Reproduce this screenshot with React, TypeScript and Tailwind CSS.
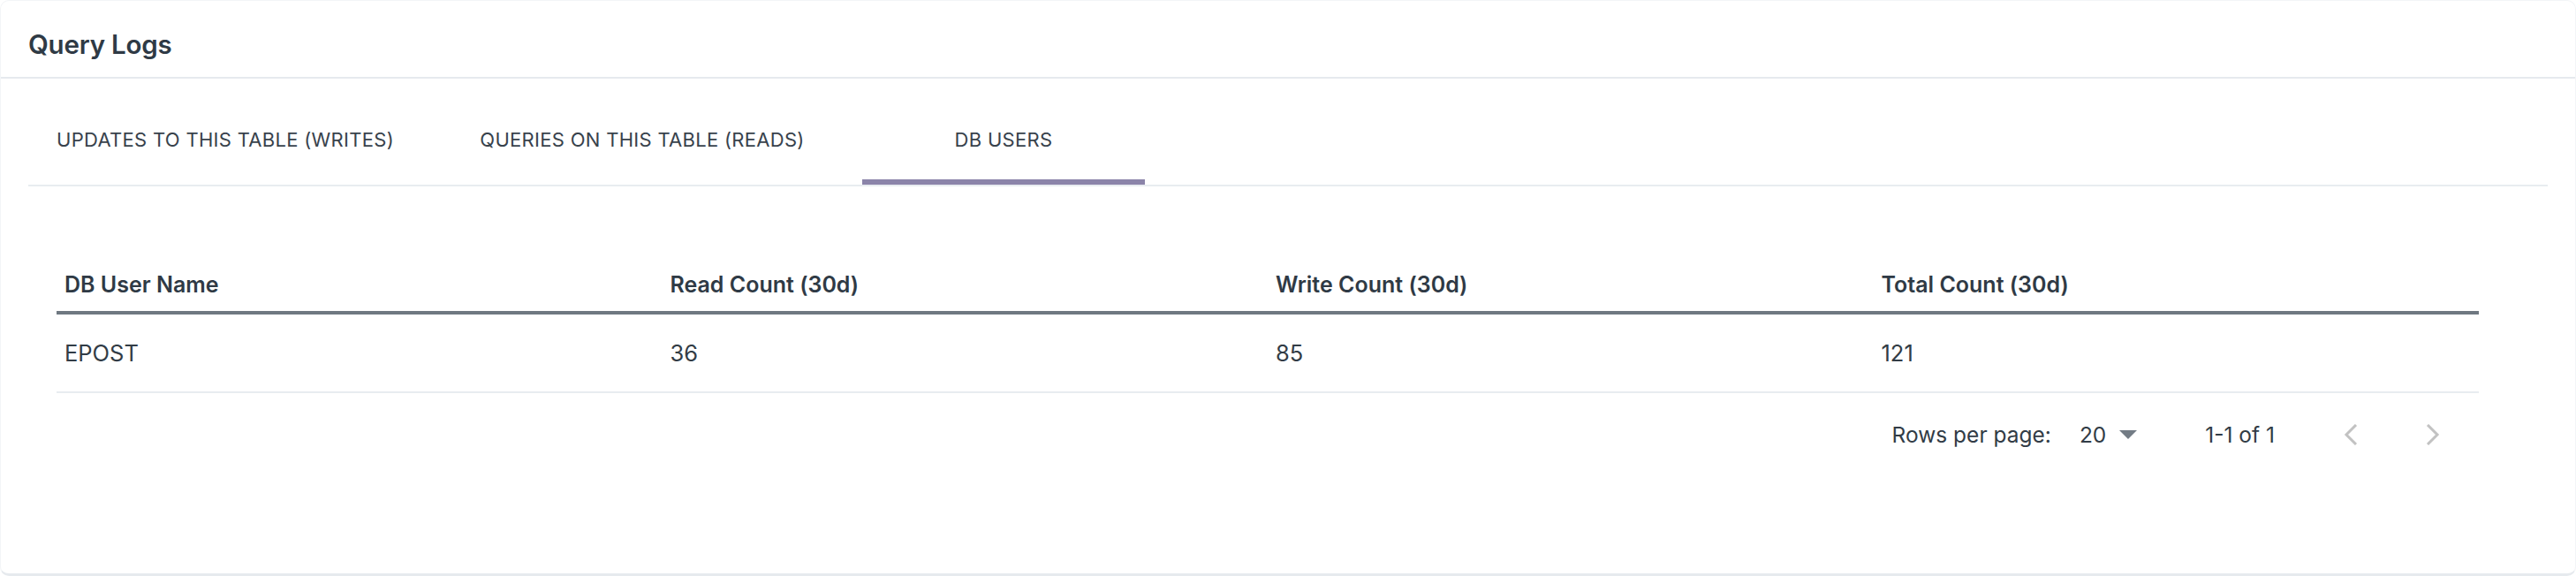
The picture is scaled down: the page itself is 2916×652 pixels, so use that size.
import React from "react";

const tabs = [
  { label: "UPDATES TO THIS TABLE (WRITES)", w: "w-[446px]", active: false },
  { label: "QUERIES ON THIS TABLE (READS)", w: "w-[498px]", active: false },
  { label: "DB USERS", w: "w-[320px]", active: true },
];

const headers = ["DB User Name", "Read Count (30d)", "Write Count (30d)", "Total Count (30d)"];
const row = ["EPOST", "36", "85", "121"];

export default function App() {
  return (
    <div className="w-[2916px] h-[652px] bg-white font-['Inter','Roboto',sans-serif] text-[#323c46]">
      <div className="h-[652px] rounded-[10px] border border-[#f3f5f7] border-b-[3px] border-b-[#e6eaee] flex flex-col overflow-hidden">
        <div className="h-[88px] pt-[12px] px-[31px] flex items-center border-b-2 border-[#e6eaee]">
          <span className="text-[29.5px] font-semibold text-[#2f3a45] tracking-[-0.2px]">Query Logs</span>
        </div>

        <div className="mx-[31px] pt-[24px] flex border-b-2 border-[#e8ecf0]">
          {tabs.map((t) => (
            <div
              key={t.label}
              className={`${t.w} h-[96px] flex items-center justify-center border-b-[6px] text-[22px] tracking-[0.3px] text-[#38424c] ${
                t.active ? "border-[#8b84a9]" : "border-transparent"
              }`}
            >
              {t.label}
            </div>
          ))}
        </div>

        <div className="mx-[63px] mt-[79px] w-[2742px]">
          <div className="grid grid-cols-4 h-[66px] pt-[3px] border-b-4 border-[#6f7881] items-center">
            {headers.map((h) => (
              <div key={h} className="pl-[9px] text-[25px] font-semibold text-[#2f3a45]">
                {h}
              </div>
            ))}
          </div>
          <div className="grid grid-cols-4 h-[89px] pt-[2px] border-b-2 border-[#e8ecf0] items-center">
            {row.map((c, i) => (
              <div key={i} className="pl-[9px] text-[25.5px] text-[#323c46]">
                {c}
              </div>
            ))}
          </div>
          <div className="h-[94px] flex items-center justify-end pr-[32px] text-[24.5px] text-[#323c46]">
            <span>Rows per page:</span>
            <span className="ml-[32px]">20</span>
            <svg className="ml-[15px]" width="20" height="10" viewBox="0 0 20 10">
              <path d="M0 0 L20 0 L10 10 Z" fill="#737c85" />
            </svg>
            <span className="ml-[77px]">1-1 of 1</span>
            <div className="ml-[66px] w-[40px] h-[40px] flex items-center justify-center">
              <svg width="16" height="24" viewBox="0 0 16 24">
                <path d="M14 1 L3 12 L14 23" fill="none" stroke="#c2c2c2" strokeWidth="3" />
              </svg>
            </div>
            <div className="ml-[53px] w-[40px] h-[40px] flex items-center justify-center">
              <svg width="16" height="24" viewBox="0 0 16 24">
                <path d="M2 1 L13 12 L2 23" fill="none" stroke="#c2c2c2" strokeWidth="3" />
              </svg>
            </div>
          </div>
        </div>
      </div>
    </div>
  );
}
